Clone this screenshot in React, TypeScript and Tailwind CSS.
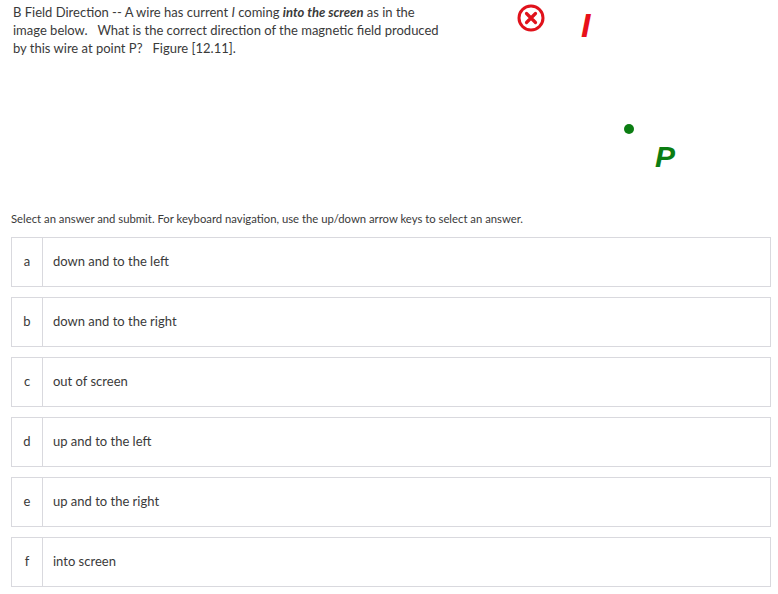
const options = [
  { key: "a", label: "down and to the left" },
  { key: "b", label: "down and to the right" },
  { key: "c", label: "out of screen" },
  { key: "d", label: "up and to the left" },
  { key: "e", label: "up and to the right" },
  { key: "f", label: "into screen" },
];

function Figure() {
  return (
    <div className="relative ml-[54px] w-[200px] h-[200px] shrink-0">
      {/* wire going into the screen */}
      <svg
        className="absolute left-[11px] top-[3px]"
        width="30"
        height="30"
        viewBox="0 0 30 30"
      >
        <circle cx="15" cy="15" r="12" fill="none" stroke="#e0121b" strokeWidth="3" />
        <path d="M10.5 10.5 L19.5 19.5 M19.5 10.5 L10.5 19.5" stroke="#e0121b" strokeWidth="3.2" strokeLinecap="round" />
      </svg>
      <span className="absolute left-[76px] top-[8px] text-[34px] leading-[34px] font-bold italic text-[#e8101a] font-['Liberation_Sans',sans-serif]">
        I
      </span>
      <span className="absolute left-[119px] top-[124px] w-[10px] h-[10px] rounded-full bg-[#0b7d12]" />
      <span className="absolute left-[150px] top-[141px] text-[30px] leading-[32px] font-bold italic text-[#0b7d12] font-['Liberation_Sans',sans-serif]">
        P
      </span>
    </div>
  );
}

export default function App() {
  return (
    <div className="min-h-screen bg-white text-[#3a3a3a] font-['Lato',sans-serif] pl-[11px] pr-[7px]">
      <div className="flex">
        <p className="w-[440px] pl-[2px] pt-[3px] text-[13px] leading-[18px]">
          B Field Direction -- A wire has current <i>I</i> coming{" "}
          <b>
            <i>into the screen</i>
          </b>{" "}
          as in the image below.&nbsp;&nbsp; What is the correct direction of the magnetic field
          produced by this wire at point P?&nbsp;&nbsp; Figure [12.11].
        </p>
        <Figure />
      </div>

      <p className="mt-[12px] text-[11.3px] leading-[14px]">
        Select an answer and submit. For keyboard navigation, use the up/down arrow keys to select an answer.
      </p>

      <ul className="mt-[11px] flex flex-col gap-[10px]">
        {options.map((opt) => (
          <li
            key={opt.key}
            className="flex h-[50px] border border-[#d9d9de] text-[13px]"
          >
            <span className="w-[31px] flex items-center justify-center border-r border-[#d9d9de]">
              {opt.key}
            </span>
            <span className="flex items-center pl-[10px]">{opt.label}</span>
          </li>
        ))}
      </ul>
    </div>
  );
}
